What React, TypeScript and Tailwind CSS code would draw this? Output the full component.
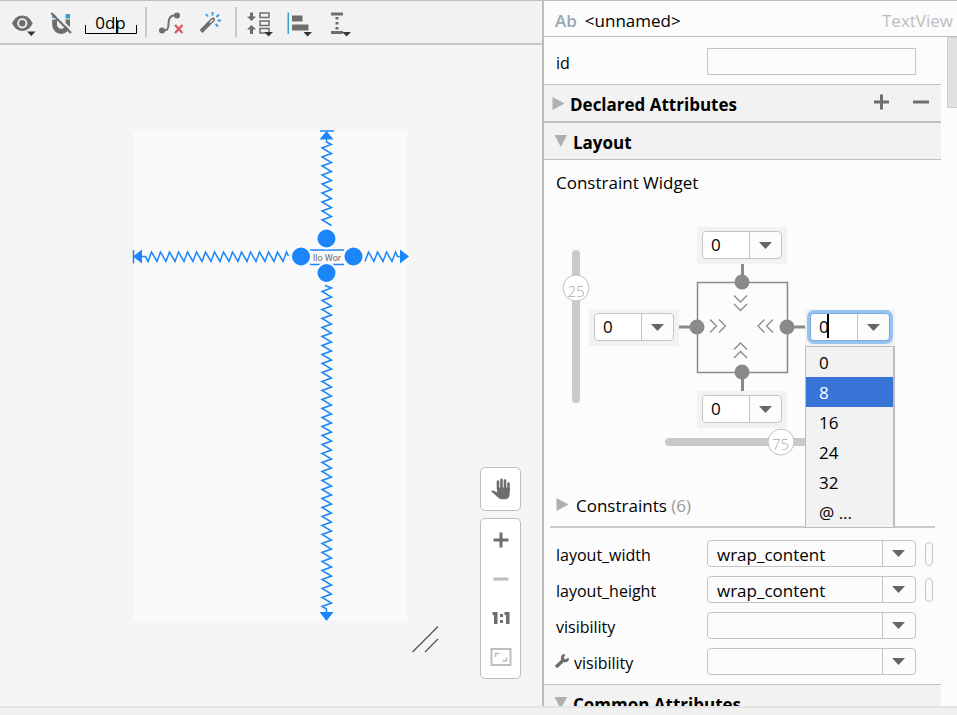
import React, { useId, useState } from "react";

const zigzag = (
  start: number,
  end: number,
  first: number,
  lead: number,
  low: number,
  high: number,
) => {
  const points: [number, number][] = [];
  for (let p = first; p <= end; p += 9) {
    if (p >= start) points.push([p, low]);
    if (p + lead <= end) points.push([p + lead, high]);
  }
  return points;
};

const toPoints = (points: [number, number][]) => points.map((p) => p.join(",")).join(" ");
const flip = (points: [number, number][]) => points.map(([a, b]) => [b, a] as [number, number]);

function ToolIcon({ label, x, children }: { label: string; x: number; children: React.ReactNode }) {
  return (
    <button type="button" aria-label={label} className="h-[42px] w-10 shrink-0">
      <svg viewBox={`${x} 1 40 42`} className="h-full w-full" fill="#6e6e6e">
        {children}
      </svg>
    </button>
  );
}

function Toolbar() {
  return (
    <div className="flex items-center border-t border-b-2 border-t-[#c0c0c0] border-b-[#c6c6c6] bg-[#f2f2f2] pl-1">
      <ToolIcon label="View options" x={4}>
        <path
          fillRule="evenodd"
          d="M12 23.3C14.5 18.3 18 15.6 22.3 15.6S30.2 18.3 32.7 23.3C30.2 28.3 26.6 31 22.3 31S14.5 28.3 12 23.3ZM22.3 18.2A5.1 5.1 0 1 0 22.3 28.4A5.1 5.1 0 1 0 22.3 18.2Z"
        />
        <circle cx="22.3" cy="23.3" r="3.2" />
        <path d="M27 31.5H35.5L31.3 36Z" fill="#333" />
      </ToolIcon>
      <ToolIcon label="Autoconnect" x={44}>
        <path d="M52.2 19.5H57V24.5A4.2 4.2 0 0 0 65.500 24.500V19.500H70V25A8.900 8.900 0 0 1 52.200 25Z" />
        <path d="M52.200 14H56.500V18H52.200ZM65.500 14H70V18.500H65.500Z" fill="#389fd6" />
        <path d="M53 11.500L72.500 31.500" stroke="#f2f2f2" strokeWidth="2" />
        <path d="M51.300 13L71 33" stroke="#6e6e6e" strokeWidth="2.200" />
      </ToolIcon>
      <button
        type="button"
        aria-label="Default margins"
        className="relative flex h-[42px] w-[57px] justify-center pt-2.5 pr-1 text-[17px] leading-6 text-black"
      >
        0dp
        <svg viewBox="84 1 57 42" className="absolute inset-0 h-full w-full" fill="none" stroke="#000">
          <path d="M85.500 25V33.500H136.500V25M116.500 17V33" />
        </svg>
      </button>
      <div className="mx-1 h-[30px] w-0.5 bg-[#c9c9c9]" />
      <ToolIcon label="Clear constraints" x={151}>
        <path
          d="M162 30.500H164C168 30.500 168.500 28 168.500 24S169 15.500 174 15.500H177"
          fill="none"
          stroke="#6e6e6e"
          strokeWidth="2"
        />
        <circle cx="162" cy="30.500" r="3" />
        <circle cx="177" cy="15.500" r="3" />
        <path d="M175 25L182.500 33M182.500 25L175 33" stroke="#db5860" strokeWidth="2.200" />
      </ToolIcon>
      <ToolIcon label="Infer constraints" x={191}>
        <path d="M201 31.500L209.500 23" stroke="#6e6e6e" strokeWidth="4" />
        <path d="M209 23.500L213 19.500" stroke="#6e6e6e" strokeWidth="4" strokeLinecap="round" />
        <path d="M210 22.500L213 19.500" stroke="#f2f2f2" strokeWidth="1.500" />
        <path
          d="M206 14L208 16.500M212.500 12V15.500M219 14.500L216.500 17M217.500 20.500H221M215.500 24L218 26.500"
          stroke="#389fd6"
          strokeWidth="2"
        />
      </ToolIcon>
      <div className="mx-1 h-[30px] w-0.5 bg-[#c9c9c9]" />
      <ToolIcon label="Pack" x={241}>
        <path d="M250 12.500H253V16.500H256L251.500 21L247 16.500H250ZM250 34H253V29.500H256L251.500 25L247 29.500H250Z" />
        <path
          d="M260 13H269V17.500H260ZM260 21H269V25.500H260ZM260 28.500H269V33H260Z"
          fill="none"
          stroke="#6e6e6e"
          strokeWidth="1.500"
        />
        <path d="M264.500 32H273L268.500 36.500Z" fill="#333" />
      </ToolIcon>
      <ToolIcon label="Align" x={281}>
        <path d="M287.500 12.500H289V34H287.500Z" fill="#389fd6" />
        <path d="M292 15.500H302.500V21.500H292ZM292 24.500H308.500V30.500H292Z" />
        <path d="M303.500 32H312L307.500 36.500Z" fill="#333" />
      </ToolIcon>
      <ToolIcon label="Guidelines" x={321}>
        <path d="M331 12.500H343V15.500H331ZM331 31H343V34H331ZM335.500 17H338.500V19.500H335.500ZM335.500 22H338.500V24.500H335.500ZM335.500 27H338.500V29.500H335.500Z" />
        <path d="M342.500 32H351L346.500 36.500Z" fill="#333" />
      </ToolIcon>
    </div>
  );
}

function Device() {
  const left = toPoints([[142, 256.5], [145.5, 256.5], ...zigzag(148, 287, 148, 3.5, 261.5, 252), [288.5, 256]]);
  const right = toPoints([...zigzag(365, 396, 365, 3.5, 261.5, 252), [397.5, 256.5], [400, 256.5]]);
  const top = toPoints([[326.5, 139], [326.5, 142], ...flip(zigzag(144, 226, 144.5, 3.5, 331.5, 322))]);
  const bottom = toPoints([
    [325, 285.5],
    ...flip(zigzag(288, 607, 288, 3.5, 331.5, 322)),
    [326.5, 609],
    [326.5, 612],
  ]);
  return (
    <div className="h-[490px] w-[274px] bg-[#fafafa]">
      <svg viewBox="133 131 274 490" className="h-full w-full overflow-visible" fill="#1a86f9">
        <g fill="none" stroke="#1a86f9" strokeWidth="1.500">
          <polyline points={left} />
          <polyline points={right} />
          <polyline points={top} />
          <polyline points={bottom} />
          <path d="M133.500 250V263.500M320 131H334" />
          <path d="M310 250H344M310 264.500H344" />
        </g>
        <path d="M133 256.500L142 249.500V263.500ZM409 256.500L400 249.500V263.500ZM326.500 131L319.500 139.500H333.500ZM326.500 621L319.500 612H333.500Z" />
        <g stroke="#fafafa" strokeWidth="2">
          <circle cx="326.500" cy="238.500" r="10" />
          <circle cx="301" cy="256.500" r="10" />
          <circle cx="353.500" cy="256.500" r="10" />
          <circle cx="326.500" cy="273" r="10" />
        </g>
        <text x="327" y="260.500" textAnchor="middle" className="fill-[#6a6a6a] font-[Roboto] text-[9px]">
          llo Wor
        </text>
      </svg>
    </div>
  );
}

function ZoomControls() {
  return (
    <div className="absolute right-[21px] bottom-[27px] flex w-[41px] flex-col gap-[7px]">
      <button
        type="button"
        aria-label="Pan"
        className="flex h-11 items-center justify-center rounded-[5px] border border-[#bdbdbd] bg-white"
      >
        <svg viewBox="490 478 22 22" className="h-[22px] w-[22px]" fill="none" stroke="#6e6e6e" strokeLinecap="round">
          <path d="M498 481.500V489M501.500 479.800V489M505 480.500V489M508.500 483.500V491" strokeWidth="2.600" />
          <path
            d="M497 487.500H509.700V494Q509.500 499.300 504.500 499.300H502Q499.500 499.300 498 497.500L491 491.300Q492.500 489.800 494.500 491L497 492.500Z"
            fill="#6e6e6e"
            stroke="none"
          />
        </svg>
      </button>
      <div className="flex flex-col rounded-[5px] border border-[#bdbdbd] bg-white pt-px pb-0.5">
        <button type="button" aria-label="Zoom in" className="flex h-[39px] items-center justify-center">
          <svg viewBox="0 0 16 16" className="h-4 w-4" stroke="#6e6e6e" strokeWidth="3">
            <path d="M8 0.500V15.500M0.500 8H15.500" />
          </svg>
        </button>
        <button type="button" aria-label="Zoom out" className="flex h-[39px] items-center justify-center">
          <svg viewBox="0 0 16 16" className="h-4 w-4" stroke="#bdbdbd" strokeWidth="3">
            <path d="M0.500 8H15.500" />
          </svg>
        </button>
        <button type="button" aria-label="Zoom to 100%" className="flex h-[39px] items-center justify-center">
          <svg viewBox="0 0 18 16" className="h-4 w-[18px]" fill="#6e6e6e">
            <path d="M0.500 2H5.500V14H2V5H0.500ZM12.500 2H17.500V14H14V5H12.500ZM8 4H11V7H8ZM8 10H11V13H8Z" />
          </svg>
        </button>
        <button type="button" aria-label="Zoom to fit" className="flex h-[39px] items-center justify-center">
          <svg viewBox="0 0 22 18" className="h-[18px] w-[22px]" fill="none" stroke="#bdbdbd">
            <rect x="1.500" y="1" width="19" height="16" strokeWidth="2" />
            <path d="M5.500 9V5.500H9.500M16.500 9.500V13H12.500" strokeWidth="1.500" />
          </svg>
        </button>
      </div>
    </div>
  );
}

function Arrow() {
  return (
    <svg viewBox="0 0 13 7" className="h-[7px] w-[13px]" fill="#666">
      <path d="M0 0H13L6.500 7Z" />
    </svg>
  );
}

function MarginBox({ label, active }: { label: string; active?: boolean }) {
  const [value, setValue] = useState("0");
  return (
    <div className="relative bg-[#f2f2f2] px-[5px] pt-1 pb-[5px]">
      <div
        className={
          active
            ? "flex h-7 rounded-[4px] border border-[#7aa9dd] bg-[#fcfcfc] ring-[3px] ring-[#97c3f3]"
            : "flex h-7 rounded-[4px] border border-[#c4c4c4] bg-[#fcfcfc]"
        }
      >
        <input
          aria-label={label}
          value={value}
          onChange={(e) => setValue(e.target.value)}
          className="w-[47px] rounded-l-[4px] border-r border-[#c4c4c4] bg-white pl-2 text-[17px] leading-6 text-black outline-none"
        />
        <button type="button" aria-label={`${label} values`} className="flex flex-1 items-center justify-center">
          <Arrow />
        </button>
      </div>
      {active && <span className="absolute top-[5px] left-[22px] h-6 w-0.5 bg-black" />}
      {active && (
        <ul
          role="listbox"
          aria-label={`${label} presets`}
          className="absolute top-[37px] left-0 z-10 w-full border border-r-2 border-[#bdbdbd] bg-[#f2f2f2] text-[17px] text-black"
        >
          {["0", "8", "16", "24", "32", "@ ..."].map((item) => (
            <li
              key={item}
              role="option"
              aria-selected={item === "8"}
              className="flex h-[30px] items-center pt-0.5 pl-[13px] aria-selected:bg-[#3874d8] aria-selected:text-white"
            >
              {item}
            </li>
          ))}
        </ul>
      )}
    </div>
  );
}

function Bias({ label, initial, vertical }: { label: string; initial: number; vertical?: boolean }) {
  const [value, setValue] = useState(initial);
  const id = useId();
  return (
    <div
      className={
        vertical
          ? "relative h-[153px] w-2 rounded-full bg-[#c9c9c9]"
          : "relative h-2 w-[154px] rounded-full bg-[#c9c9c9]"
      }
    >
      <output
        htmlFor={id}
        style={vertical ? { top: `${value}%` } : { left: `${value}%` }}
        className={
          vertical
            ? "absolute left-1/2 flex size-[27px] -translate-x-1/2 -translate-y-1/2 items-center justify-center rounded-full border border-[#c0c0c0] bg-white pt-1 text-[15px] font-light text-[#aaa]"
            : "absolute top-1/2 flex size-[27px] -translate-x-1/2 -translate-y-1/2 items-center justify-center rounded-full border border-[#c0c0c0] bg-white pt-1 text-[15px] font-light text-[#aaa]"
        }
      >
        {value}
      </output>
      <input
        id={id}
        type="range"
        aria-label={label}
        value={value}
        onChange={(e) => setValue(Number(e.target.value))}
        className={
          vertical
            ? "absolute inset-0 h-full w-full opacity-0 [writing-mode:vertical-lr]"
            : "absolute inset-0 h-full w-full opacity-0"
        }
      />
    </div>
  );
}

function ConstraintBox() {
  return (
    <svg viewBox="0 0 91 91" className="size-[91px] max-w-none overflow-visible" fill="none" stroke="#8a8a8a">
      <rect x="0.500" y="0.500" width="90" height="90" strokeWidth="1.500" />
      <path d="M45.500 -18V0M45.500 91V109M-18 45H0M91 45H108" strokeWidth="3" />
      <path
        d="M37 13.500L43.500 20L50 13.500M37 22L43.500 28.500L50 22M37 67.500L43.500 61L50 67.500M37 76L43.500 69.500L50 76M13 37.500L19.500 44L13 50.500M22 37.500L28.500 44L22 50.500M67.500 37.500L61 44L67.500 50.500M76 37.500L69.500 44L76 50.500"
        strokeWidth="1.300"
      />
      <g fill="#8a8a8a" stroke="none">
        <circle cx="45" cy="0" r="7.500" />
        <circle cx="45" cy="90" r="7.500" />
        <circle cx="0" cy="45" r="7.500" />
        <circle cx="90" cy="45" r="7.500" />
      </g>
    </svg>
  );
}

function Triangle({ open }: { open?: boolean }) {
  return (
    <svg viewBox="0 0 13 13" className="size-[13px] shrink-0" fill="#afafaf">
      <path d={open ? "M0.500 0H13L6.800 12Z" : "M0.500 0L12.500 6.500L0.500 13Z"} />
    </svg>
  );
}

function SelectRow({
  label,
  value,
  tool,
  picker,
}: {
  label: string;
  value: string;
  tool?: boolean;
  picker?: boolean;
}) {
  const id = useId();
  return (
    <div className="flex h-[27px] items-center pl-3">
      <label htmlFor={id} className="flex w-[151px] shrink-0 items-center gap-1 pt-0.5 text-base leading-6">
        {tool && (
          <svg viewBox="0 0 16 16" className="-ml-0.5 size-4 -translate-y-0.5" fill="none" stroke="#6e6e6e">
            <path d="M2 14L9 7.500" strokeWidth="3.500" />
            <path d="M10.500 1.800A3.600 3.600 0 1 0 14.300 5.500L11.500 6.500L9.600 4.700Z" fill="#6e6e6e" stroke="none" />
            <path d="M10.800 2.200A3 3 0 1 0 14 5.200" strokeWidth="2.200" />
          </svg>
        )}
        {label}
      </label>
      <div className="relative h-[27px] min-w-0 flex-1">
        <select
          id={id}
          defaultValue={value}
          className="h-full w-full appearance-none rounded-[4px] border border-[#c4c4c4] bg-[#fcfcfc] pt-0.5 pr-9 pl-[9px] text-[17px] leading-6 text-black"
        >
          <option value={value}>{value}</option>
        </select>
        <span className="pointer-events-none absolute inset-y-0 right-0 flex w-[34px] items-center justify-center border-l border-[#c4c4c4] pr-0.5">
          <Arrow />
        </span>
      </div>
      <div className="flex w-[25px] shrink-0 justify-center">
        {picker && (
          <button
            type="button"
            aria-label={`Pick a resource for ${label}`}
            className="h-6 w-2 rounded-full border border-[#c4c4c4]"
          />
        )}
      </div>
    </div>
  );
}

function Attributes() {
  return (
    <div className="flex min-h-0 flex-1">
      <div className="min-w-0 flex-1 overflow-hidden">
        <div className="flex h-[47px] items-center pt-0.5 pl-3">
          <label htmlFor="view-id" className="w-[151px] shrink-0 pt-0.5 text-base">
            id
          </label>
          <input
            id="view-id"
            className="mr-[25px] h-[27px] min-w-0 flex-1 border border-[#c4c4c4] bg-[#fcfcfc] px-2 text-[17px] outline-none"
          />
        </div>

        <div className="flex h-[39px] items-center border-t border-b-2 border-[#bfbfbf] bg-[#f2f2f2] pr-3 pl-2">
          <button type="button" className="flex items-center gap-[5px] text-[17px] leading-6 font-bold">
            <Triangle />
            <span className="pt-1">Declared Attributes</span>
          </button>
          <button type="button" aria-label="Add attribute" className="mr-6 ml-auto pb-0.5">
            <svg viewBox="0 0 16 16" className="size-4" stroke="#6e6e6e" strokeWidth="3">
              <path d="M8.500 0.500V15.500M1 8H16" />
            </svg>
          </button>
          <button type="button" aria-label="Remove attribute" className="pb-0.5">
            <svg viewBox="0 0 16 16" className="size-4" stroke="#6e6e6e" strokeWidth="3">
              <path d="M0 8H16" />
            </svg>
          </button>
        </div>

        <div className="flex h-[37px] items-center border-b border-[#bfbfbf] bg-[#f2f2f2] pl-2.5">
          <button type="button" className="flex items-center gap-1.5 text-[17px] leading-6 font-bold">
            <Triangle open />
            <span className="pt-1">Layout</span>
          </button>
        </div>

        <h3 className="pt-[11px] pl-3 text-[17px] leading-6">Constraint Widget</h3>
        <div className="grid grid-cols-[auto_1fr] gap-x-[9px] pt-8 pl-7">
          <div className="pt-[23px]">
            <Bias label="Vertical bias" initial={25} vertical />
          </div>
          <div className="grid grid-cols-[90px_90px_90px] grid-rows-[37px_91px_37px] items-center gap-[18px]">
            <div className="col-start-2">
              <MarginBox label="Top margin" />
            </div>
            <div className="col-start-1 row-start-2">
              <MarginBox label="Left margin" />
            </div>
            <div className="col-start-2 row-start-2">
              <ConstraintBox />
            </div>
            <div className="z-10 col-start-3 row-start-2">
              <MarginBox label="Right margin" active />
            </div>
            <div className="col-start-2 row-start-3">
              <MarginBox label="Bottom margin" />
            </div>
          </div>
          <div className="col-start-2 pt-[10px] pl-[76px]">
            <Bias label="Horizontal bias" initial={75} />
          </div>
        </div>

        <div className="mx-1.5 mt-11 border-b-2 border-[#cacaca] pb-2 pl-1.5">
          <button type="button" className="flex items-center gap-[7px] text-[17px] leading-6">
            <Triangle />
            <span className="pt-1">
              Constraints <span className="text-[#999]">(6)</span>
            </span>
          </button>
        </div>

        <div className="flex flex-col gap-[9px] pt-3 pb-[9px]">
          <SelectRow label="layout_width" value="wrap_content" picker />
          <SelectRow label="layout_height" value="wrap_content" picker />
          <SelectRow label="visibility" value="" />
          <SelectRow label="visibility" value="" tool />
        </div>

        <div className="flex h-[37px] items-center border-t border-[#bfbfbf] bg-[#f2f2f2] pl-2.5">
          <button type="button" className="flex items-center gap-1.5 text-[17px] leading-6 font-bold">
            <Triangle open />
            <span className="pt-1">Common Attributes</span>
          </button>
        </div>
      </div>
      <div className="w-4 shrink-0 pl-1.5">
        <div className="h-[71px] border border-r-0 border-[#cfcfcf] bg-[#e1e1e1]" />
      </div>
    </div>
  );
}

export default function App() {
  return (
    <div className="flex h-screen flex-col overflow-hidden bg-[#f0f0f0] font-['Open_Sans','Noto_Sans',sans-serif] text-black">
      <div className="flex min-h-0 flex-1">
        <main className="flex min-w-0 flex-1 flex-col bg-[#f5f5f5]">
          <Toolbar />
          <div className="relative flex min-h-0 flex-1 justify-center pt-[86px] pr-0.5">
            <div className="flex flex-col">
              <Device />
              <svg viewBox="0 0 27 32" className="-mr-8 h-8 w-[27px] self-end" stroke="#555" strokeWidth="1.300">
                <path d="M0.500 31L26 5.500M13 31L26 18" />
              </svg>
            </div>
            <ZoomControls />
          </div>
        </main>
        <aside className="flex w-[415px] shrink-0 flex-col border-l-2 border-[#bdbdbd] bg-[#fcfcfc]">
          <header className="flex h-[37px] shrink-0 items-center gap-2 border-y border-[#bfbfbf] pt-1 pr-1 pl-[11px] text-[17px] leading-6">
            <span aria-hidden="true" className="font-semibold text-[#9aa7b0]">
              Ab
            </span>
            <span>&lt;unnamed&gt;</span>
            <span className="ml-auto text-[#bdbdbd]">TextView</span>
          </header>
          <Attributes />
        </aside>
      </div>
      <footer className="h-[9px] shrink-0 border-t-2 border-[#e4e4e4] bg-[#f0f0f0]" />
    </div>
  );
}
